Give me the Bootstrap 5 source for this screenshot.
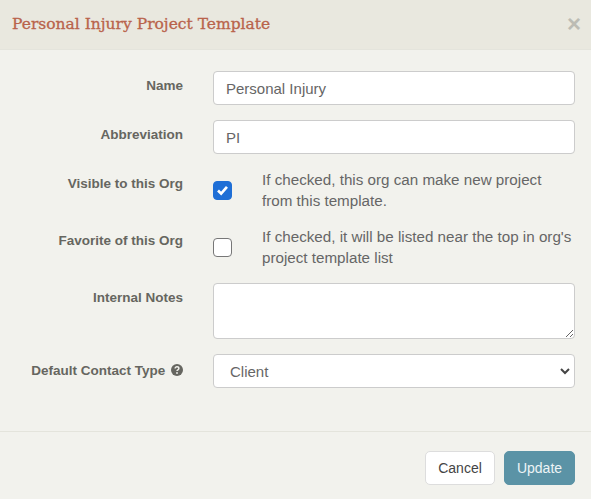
<!DOCTYPE html>
<html lang="en">
<head>
<meta charset="utf-8">
<title>Personal Injury Project Template</title>
<link href="https://cdn.jsdelivr.net/npm/bootstrap@5.3.0/dist/css/bootstrap.min.css" rel="stylesheet">
<style>
html, body { height: 100%; }
body { background: #f2f2ed; font-family: "Liberation Sans", Arial, sans-serif; color: #666; overflow: hidden; }
.tpl-dialog { border: 0; border-radius: 0; background: #f2f2ed; height: 499px; }
.tpl-head { height: 50px; padding: 0 12px; background: #e9e8df; border-bottom: 1px solid #e4e4dc; border-radius: 0; }
.tpl-title { font-family: "DejaVu Serif", serif; font-size: 15.5px; line-height: 1; color: #b9634b; margin: 0; -webkit-text-stroke: .3px #b9634b; }
.tpl-close { font-size: 24px; font-weight: 700; line-height: 1; color: #bcbcb4; background: none; border: 0; padding: 0; margin: 0 -2px 2px 0; }
.tpl-body { padding: 21px 16px 43px 0; flex: none; }
.tpl-row { display: flex; margin-bottom: 15px; }
.tpl-row:last-child { margin-bottom: 0; }
.tpl-label { flex: 0 0 183px; margin-right: 30px; text-align: right; font-size: 13.5px; line-height: 16px; font-weight: 700; color: #666660; padding-top: 7px; margin-bottom: 0; }
.tpl-label-sel { padding-top: 9px; }
.tpl-field { flex: 1 1 auto; min-width: 0; }
.tpl-input { height: 34px; border: 1px solid #ccc; border-radius: 4px; padding: 0 12px; font-size: 15px; color: #666; }
.tpl-notes { height: 56px; display: block; }
.tpl-select { padding: 2px 12px 0 16px; color: #666; font-size: 15px; background-image: url("data:image/svg+xml,%3csvg xmlns='http://www.w3.org/2000/svg' viewBox='0 0 10 7'%3e%3cpath fill='none' stroke='%23444' stroke-width='2' d='M1 1l4 4 4-4'/%3e%3c/svg%3e"); background-size: 10px 7px; background-position: right 4px center; }
.tpl-check { width: 19px; height: 19px; margin: 0 30px 0 0; flex: none; border: 1px solid #777; border-radius: 3px; }
.tpl-check:checked { background-color: #1f6fd6; border-color: #1f6fd6; background-size: 100%; background-image: url("data:image/svg+xml,%3csvg xmlns='http://www.w3.org/2000/svg' viewBox='0 0 19 19'%3e%3cpath fill='none' stroke='%23fff' stroke-width='3' d='M4.5 9.5l3.5 3.5 6.5-7.5'/%3e%3c/svg%3e"); }
.tpl-help { font-size: 15.2px; line-height: 21px; color: #666; }
.tpl-foot { padding: 19px 16px 14px; border-top: 1px solid #e4e4dc; gap: 9px; }
.tpl-btn { height: 34px; padding: 0; font-size: 14px; border-radius: 5px; margin: 0; }
.tpl-cancel { width: 70px; background: #fff; border: 1px solid #ddd; color: #444; }
.tpl-update { width: 71px; background: #5b93a6; border: 1px solid #5b93a6; color: #eef4f6; }
.tpl-q { margin-left: 2px; vertical-align: -1px; }
</style>
</head>
<body>
<div class="modal-content tpl-dialog">
  <div class="modal-header tpl-head d-flex justify-content-between align-items-center">
    <h5 class="tpl-title">Personal Injury Project Template</h5>
    <button type="button" class="tpl-close" aria-label="Close">×</button>
  </div>
  <form class="modal-body tpl-body">
    <div class="tpl-row">
      <label class="tpl-label" for="f-name">Name</label>
      <div class="tpl-field"><input id="f-name" class="form-control tpl-input" type="text" value="Personal Injury"></div>
    </div>
    <div class="tpl-row">
      <label class="tpl-label" for="f-abbr">Abbreviation</label>
      <div class="tpl-field"><input id="f-abbr" class="form-control tpl-input" type="text" value="PI"></div>
    </div>
    <div class="tpl-row">
      <label class="tpl-label" for="f-vis">Visible to this Org</label>
      <div class="tpl-field d-flex align-items-center">
        <input id="f-vis" class="form-check-input tpl-check" type="checkbox" checked>
        <div class="tpl-help">If checked, this org can make new project<br>from this template.</div>
      </div>
    </div>
    <div class="tpl-row">
      <label class="tpl-label" for="f-fav">Favorite of this Org</label>
      <div class="tpl-field d-flex align-items-center">
        <input id="f-fav" class="form-check-input tpl-check" type="checkbox">
        <div class="tpl-help">If checked, it will be listed near the top in org's<br>project template list</div>
      </div>
    </div>
    <div class="tpl-row">
      <label class="tpl-label" for="f-notes">Internal Notes</label>
      <div class="tpl-field"><textarea id="f-notes" class="form-control tpl-input tpl-notes"></textarea></div>
    </div>
    <div class="tpl-row">
      <label class="tpl-label tpl-label-sel" for="f-type">Default Contact Type <svg class="tpl-q" width="12" height="12" viewBox="0 0 12 12" aria-hidden="true"><circle cx="6" cy="6" r="6" fill="#666660"/><path d="M4.1 4.6c0-1.1.9-1.8 1.9-1.8s1.9.7 1.9 1.7c0 1.3-1.9 1.4-1.9 2.5" fill="none" stroke="#f2f2ed" stroke-width="1.4"/><circle cx="6" cy="9" r=".9" fill="#f2f2ed"/></svg></label>
      <div class="tpl-field"><select id="f-type" class="form-select tpl-input tpl-select"><option>Client</option></select></div>
    </div>
  </form>
  <div class="modal-footer tpl-foot justify-content-end">
    <button type="button" class="btn tpl-btn tpl-cancel">Cancel</button>
    <button type="button" class="btn tpl-btn tpl-update">Update</button>
  </div>
</div>
<script src="https://cdn.jsdelivr.net/npm/bootstrap@5.3.0/dist/js/bootstrap.bundle.min.js"></script>
</body>
</html>
